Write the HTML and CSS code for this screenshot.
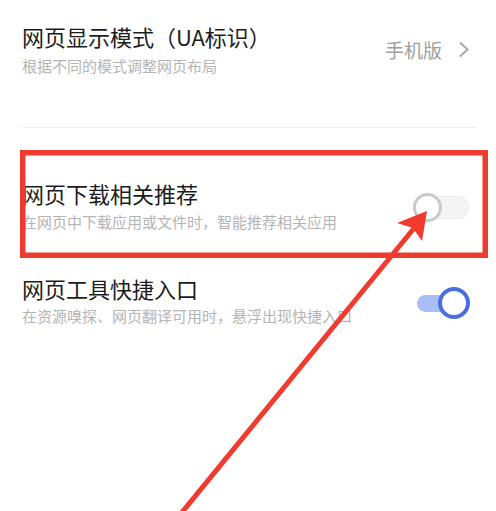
FILE: index.html
```html
<!DOCTYPE html>
<html lang="zh-CN">
<head>
<meta charset="utf-8">
<link rel="stylesheet" href="styles.css">
</head>
<body>
<div class="page">
  <div class="row row-ua">
    <div class="text">
      <div class="title">网页显示模式（UA标识）</div>
      <div class="sub">根据不同的模式调整网页布局</div>
    </div>
    <div class="value">
      <span class="value-text">手机版</span>
      <svg class="chev" width="12" height="17" viewBox="0 0 12 17"><path d="M2 1.5 L9.5 8.5 L2 15.5" fill="none" stroke="#a8a8a8" stroke-width="2"/></svg>
    </div>
  </div>
  <div class="divider"></div>
  <div class="row row-dl">
    <div class="text">
      <div class="title">网页下载相关推荐</div>
      <div class="sub">在网页中下载应用或文件时，智能推荐相关应用</div>
    </div>
    <div class="switch off"><span class="track"></span><span class="knob"></span></div>
  </div>
  <div class="row row-tool">
    <div class="text">
      <div class="title">网页工具快捷入口</div>
      <div class="sub sub-tool">在资源嗅探、网页翻译可用时，悬浮出现快捷入口</div>
    </div>
    <div class="switch on"><span class="track"></span><span class="knob"></span></div>
  </div>
  <svg class="annot" width="496" height="511" viewBox="0 0 496 511">
    <rect x="22.75" y="152.75" width="462.5" height="102.5" fill="none" stroke="#ef3a2f" stroke-width="5.5"/>
    <line x1="415" y1="227" x2="179" y2="516" stroke="#f23a2e" stroke-width="5"/>
    <polygon points="427,211 397,223 413,228 422,241" fill="#f23a2e"/>
  </svg>
</div>
</body>
</html>
```
FILE: styles.css
```css
html, body {
  margin: 0;
  padding: 0;
  background: #ffffff;
}
.page {
  position: relative;
  width: 496px;
  height: 511px;
  overflow: hidden;
  font-family: "Noto Sans CJK SC", "Noto Sans", sans-serif;
}
.row {
  display: flex;
  align-items: center;
  justify-content: space-between;
  padding-left: 22px;
  padding-right: 26px;
}
.title {
  font-size: 22px;
  line-height: 30px;
  color: #1c1c1c;
}
.sub {
  font-size: 15px;
  line-height: 20px;
  color: #b4b4b4;
  margin-top: 4px;
}
.row-ua {
  padding-top: 21px;
  padding-bottom: 51px;
}
.row-ua .sub {
  margin-top: 5px;
}
.value {
  display: flex;
  align-items: center;
  gap: 16px;
  margin-top: 2px;
}
.value-text {
  font-size: 19px;
  line-height: 26px;
  color: #a0a0a0;
}
.chev {
  display: block;
}
.divider {
  height: 1px;
  background: #ededed;
  margin: 0 20px 0 22px;
}
.row-dl {
  padding-top: 50px;
  padding-bottom: 41px;
}
.row-tool .sub-tool {
  margin-top: 3px;
}
.switch {
  position: relative;
  width: 57px;
  height: 32px;
  flex: none;
  margin-top: 6px;
}
.switch .track {
  position: absolute;
  border-radius: 12px;
}
.switch .knob {
  position: absolute;
  box-sizing: border-box;
  border-radius: 50%;
  background: #ffffff;
}
.switch.off .track {
  left: 0;
  top: 4px;
  width: 56px;
  height: 23px;
  background: #f4f4f4;
  box-shadow: inset 0 0 0 1px #ececec;
}
.switch.off .knob {
  left: 0;
  top: 1px;
  width: 29px;
  height: 29px;
  border: 3px solid #c9c9c9;
}
.switch.on .track {
  left: 4px;
  top: 8px;
  width: 44px;
  height: 17px;
  background: #a9bef6;
}
.switch.on .knob {
  right: 0;
  top: 0;
  width: 32px;
  height: 32px;
  border: 4px solid #4a6fdc;
}
.annot {
  position: absolute;
  left: 0;
  top: 0;
  pointer-events: none;
}
```
